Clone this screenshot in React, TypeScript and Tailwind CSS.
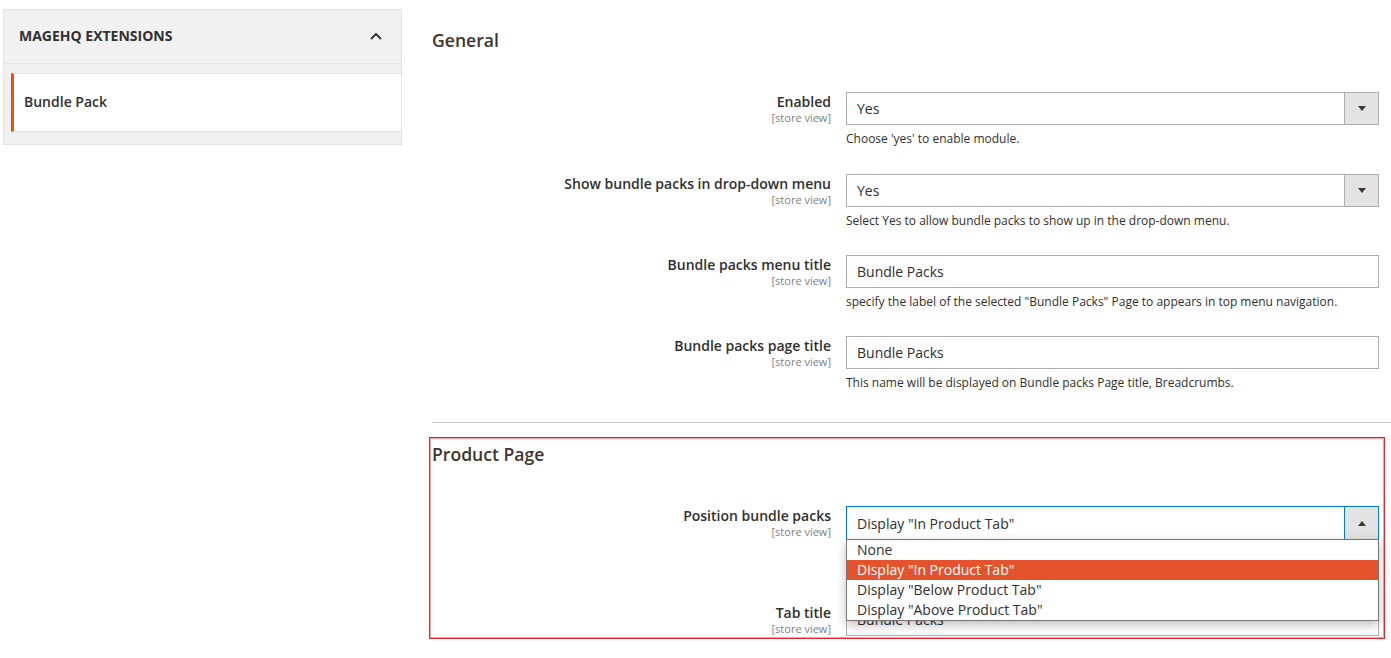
import React from "react";

function Arrow({ up = false }: { up?: boolean }) {
  return (
    <svg width="10" height="6" viewBox="0 0 10 6" className="block">
      {up ? (
        <polygon points="1,6 9,6 5,1" fill="#41362f" />
      ) : (
        <polygon points="1,0 9,0 5,5" fill="#41362f" />
      )}
    </svg>
  );
}

function Label({ title }: { title: string }) {
  return (
    <div className="w-[399px] shrink-0 pt-[1px] text-right">
      <div className="text-[14px] leading-[18px] font-semibold text-[#303030]">{title}</div>
      <div className="text-[11px] leading-[14px] text-[#808080]">[store view]</div>
    </div>
  );
}

function SelectBox({ value, focused = false, up = false }: { value: string; focused?: boolean; up?: boolean }) {
  const border = focused ? "border-[#007bdb]" : "border-[#adadad]";
  return (
    <div className={`flex w-[533px] border ${border} bg-white ${focused ? "h-[34px]" : "h-[33px]"}`}>
      <div className="flex flex-1 items-center pl-[10px] text-[14px] text-[#303030]">{value}</div>
      <div className={`flex w-[34px] items-center justify-center border-l ${border} bg-[#e3e3e3]`}>
        <Arrow up={up} />
      </div>
    </div>
  );
}

function InputBox({ value }: { value: string }) {
  return (
    <div className="flex h-[33px] w-[533px] items-center border border-[#adadad] bg-white pl-[10px] text-[14px] text-[#303030]">
      {value}
    </div>
  );
}

function Note({ children }: { children: React.ReactNode }) {
  return <div className="mt-[6px] text-[12px] leading-[16px] text-[#303030]">{children}</div>;
}

export default function App() {
  return (
    <div className="flex min-h-[658px] w-[1391px] bg-white font-['Open_Sans',sans-serif]">
      {/* Sidebar */}
      <div className="ml-[3px] mt-[9px] h-[136px] w-[399px] shrink-0 border border-[#e3e3e3] bg-[#f1f1f1]">
        <div className="flex h-[54px] items-center justify-between border-b border-[#e3e3e3] pb-[2px] pl-[15px] pr-[18px]">
          <span className="text-[14px] font-bold text-[#303030]">MAGEHQ EXTENSIONS</span>
          <svg width="14" height="10" viewBox="0 0 14 10">
            <polyline points="2,8 7,3 12,8" fill="none" stroke="#303030" strokeWidth="1.8" />
          </svg>
        </div>
        <div className="mt-[9px] ml-[7px] flex h-[59px] items-center border-y border-l-[3px] border-[#e3e3e3] border-l-[#eb5202] bg-white pb-[2px] pl-[10px]">
          <span className="text-[14px] font-semibold text-[#303030]">Bundle Pack</span>
        </div>
      </div>

      {/* Main */}
      <div className="ml-[30px] flex-1">
        <div className="pt-[30px] text-[17.6px] leading-[20px] font-semibold text-[#41362f]">General</div>

        <div className="mt-[42px] mb-[27px] flex">
          <Label title="Enabled" />
          <div className="ml-[15px]">
            <SelectBox value="Yes" />
            <Note>Choose 'yes' to enable module.</Note>
          </div>
        </div>

        <div className="mb-[26px] flex">
          <Label title="Show bundle packs in drop-down menu" />
          <div className="ml-[15px]">
            <SelectBox value="Yes" />
            <Note>Select Yes to allow bundle packs to show up in the drop-down menu.</Note>
          </div>
        </div>

        <div className="mb-[26px] flex">
          <Label title="Bundle packs menu title" />
          <div className="ml-[15px]">
            <InputBox value="Bundle Packs" />
            <Note>specify the label of the selected "Bundle Packs" Page to appears in top menu navigation.</Note>
          </div>
        </div>

        <div className="flex">
          <Label title="Bundle packs page title" />
          <div className="ml-[15px]">
            <InputBox value="Bundle Packs" />
            <Note>This name will be displayed on Bundle packs Page title, Breadcrumbs.</Note>
          </div>
        </div>

        <div className="mt-[31px] h-px bg-[#cccccc]" />

        <div className="-ml-[3px] mr-[6px] mt-[14px] border border-[#e3262b] pb-[2px] pl-[2px] shadow-[inset_0_0_0_1px_#f8a0a0]">
          <div className="pt-[6px] text-[17.6px] leading-[20px] font-semibold text-[#41362f]">Product Page</div>

          <div className="mt-[42px] flex">
            <Label title="Position bundle packs" />
            <div className="relative ml-[15px]">
              <SelectBox value={'Display "In Product Tab"'} focused up />
            </div>
          </div>

          <div className="mt-[63px] flex">
            <Label title="Tab title" />
            <div className="ml-[15px]">
              <InputBox value="Bundle Packs" />
            </div>
          </div>
        </div>
      </div>

      {/* Open dropdown list overlay */}
      <div className="absolute left-[846px] top-[539px] w-[533px] border border-[#767676] bg-white font-['Open_Sans',sans-serif] text-[14px] leading-[20px] text-[#303030] shadow-[0_4px_10px_rgba(0,0,0,0.25)]">
        <div className="h-[20px] pl-[10px]">None</div>
        <div className="h-[20px] bg-[#e4532b] pl-[10px] text-white">Display "In Product Tab"</div>
        <div className="h-[20px] pl-[10px]">Display "Below Product Tab"</div>
        <div className="h-[20px] pl-[10px]">Display "Above Product Tab"</div>
      </div>
    </div>
  );
}
